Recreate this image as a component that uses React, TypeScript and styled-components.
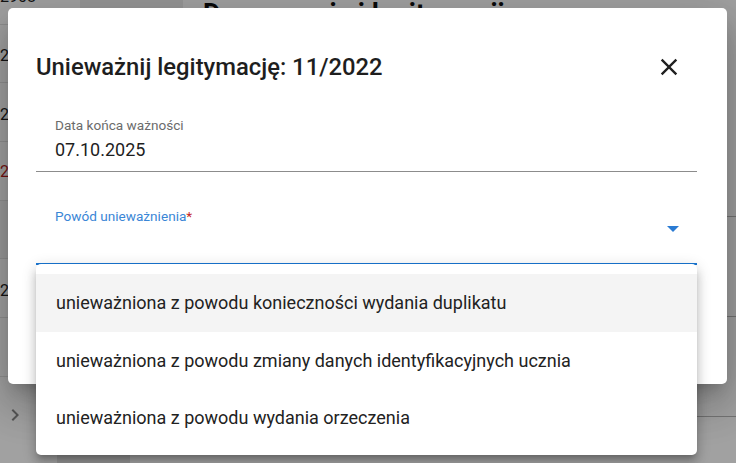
import React from "react";
import styled, { createGlobalStyle } from "styled-components";

const Global = createGlobalStyle`
  html, body { margin: 0; padding: 0; background: #fff; }
  body { font-family: Roboto, "Noto Sans", Arial, sans-serif; }
  * { box-sizing: border-box; }
`;

const Page = styled.div`
  position: relative;
  width: 736px;
  height: 463px;
  overflow: hidden;
  background: #fff;
  font-family: Roboto, "Noto Sans", Arial, sans-serif;
`;

const Layout = styled.div`
  display: grid;
  grid-template-columns: 80px 103px 1fr;
  grid-template-rows: 384px 79px;
  height: 100%;
`;

const NumCol = styled.div`
  grid-column: 1;
  grid-row: 1;
  display: flex;
  flex-direction: column;
  margin-top: -34px;
`;

const NumRow = styled.div<{ $tint?: boolean; $red?: boolean }>`
  height: 58.67px;
  flex: none;
  display: flex;
  align-items: center;
  border-bottom: 1px solid #e2e2e2;
  background: ${(p) => (p.$tint ? "#f6f6f6" : "#fff")};
  color: ${(p) => (p.$red ? "#b71c1c" : "#222")};
  font-size: 16px;
  padding-top: ${(p) => (p.$red ? "2px" : "4px")};
`;

const ShadeCol = styled.div`
  grid-column: 2;
  grid-row: 1;
  background: #eeeeee;
`;

const Main = styled.div`
  grid-column: 3;
  grid-row: 1 / 3;
  padding-left: 20px;
  display: flex;
  flex-direction: column;
`;

const Heading = styled.h1`
  margin: -2px 0 0;
  font-size: 27px;
  line-height: 32px;
  font-weight: 700;
  color: #111;
`;

const BgTable = styled.div`
  margin-top: 87px;
  display: flex;
  flex-direction: column;
`;

const BgRow = styled.div`
  height: 100px;
  border-bottom: 1px solid #b8b8b8;
`;

const Footer = styled.div`
  grid-column: 1 / 3;
  grid-row: 2;
  display: flex;
`;

const ChevronCell = styled.div`
  width: 57px;
  display: flex;
  align-items: flex-start;
  padding: 19px 0 0 3px;
  color: #888;
`;

const DarkCell = styled.div`
  width: 73px;
  background: #e6e6e6;
`;

const Backdrop = styled.div`
  position: absolute;
  inset: 0;
  background: rgba(0, 0, 0, 0.37);
`;

const Dialog = styled.div`
  position: absolute;
  left: 8px;
  top: 8px;
  width: 719px;
  height: 376px;
  background: #fff;
  border-radius: 5px;
  box-shadow: 0px 11px 15px -7px rgba(0, 0, 0, 0.2),
    0px 24px 38px 3px rgba(0, 0, 0, 0.14), 0px 9px 46px 8px rgba(0, 0, 0, 0.12);
  padding: 43px 30px 0 28px;
  display: flex;
  flex-direction: column;
`;

const TitleRow = styled.div`
  display: flex;
  align-items: center;
  justify-content: space-between;
  height: 32px;
`;

const Title = styled.h2`
  margin: 0;
  font-size: 23.8px;
  line-height: 32px;
  font-weight: 500;
  color: #1e1e1e;
`;

const CloseBtn = styled.button`
  border: 0;
  background: none;
  padding: 0;
  margin-right: 14px;
  width: 28px;
  height: 28px;
  display: flex;
  color: #202020;
  cursor: pointer;
`;

const Field = styled.div<{ $top: number; $active?: boolean }>`
  margin-top: ${(p) => p.$top}px;
  padding: 5px 18px 9px 19px;
  border-bottom: ${(p) => (p.$active ? "2px solid #1976d2" : "1px solid #8c8c8c")};
  display: flex;
  flex-direction: column;
`;

const Label = styled.div<{ $active?: boolean }>`
  font-size: 13.6px;
  line-height: 16px;
  color: ${(p) => (p.$active ? "#3a86d6" : "#6b6b6b")};
`;

const Required = styled.span`
  color: #c62828;
`;

const ValueRow = styled.div`
  margin-top: 5.5px;
  height: 24px;
  display: flex;
  justify-content: space-between;
  align-items: flex-start;
  font-size: 18px;
  line-height: 24px;
  color: #1e1e1e;
`;

const Arrow = styled.svg`
  margin-top: -4px;
  flex: none;
`;

const Menu = styled.ul`
  position: absolute;
  left: 36px;
  top: 264px;
  width: 661px;
  margin: 0;
  padding: 10px 0 8.5px;
  list-style: none;
  background: #fff;
  border-radius: 5px;
  box-shadow: 0px 5px 5px -3px rgba(0, 0, 0, 0.2),
    0px 8px 10px 1px rgba(0, 0, 0, 0.14), 0px 3px 14px 2px rgba(0, 0, 0, 0.12);
`;

const MenuItem = styled.li<{ $hover?: boolean }>`
  height: 57.5px;
  display: flex;
  align-items: center;
  padding: 0 20px;
  font-size: 18px;
  color: #222;
  background: ${(p) => (p.$hover ? "#f4f4f4" : "transparent")};
`;

const rows = [
  { t: "2908" },
  { t: "2907" },
  { t: "2906" },
  { t: "2905", red: true },
  { t: "", tint: true },
  { t: "2903" },
  { t: "" },
];

const options = [
  "unieważniona z powodu konieczności wydania duplikatu",
  "unieważniona z powodu zmiany danych identyfikacyjnych ucznia",
  "unieważniona z powodu wydania orzeczenia",
];

export default function App() {
  return (
    <>
      <Global />
      <Page>
        <Layout>
          <NumCol>
            {rows.map((r, i) => (
              <NumRow key={i} $red={r.red} $tint={r.tint}>
                {r.t}
              </NumRow>
            ))}
          </NumCol>
          <ShadeCol />
          <Main>
            <Heading>Dane ucznia i legitymacji</Heading>
            <BgTable>
              <BgRow />
              <BgRow />
              <BgRow />
            </BgTable>
          </Main>
          <Footer>
            <ChevronCell>
              <svg width="24" height="24" viewBox="0 0 24 24" fill="currentColor">
                <path d="M10 6 8.59 7.41 13.17 12l-4.58 4.59L10 18l6-6z" />
              </svg>
            </ChevronCell>
            <DarkCell />
          </Footer>
        </Layout>
        <Backdrop />
        <Dialog>
          <TitleRow>
            <Title>Unieważnij legitymację: 11/2022</Title>
            <CloseBtn aria-label="Zamknij">
              <svg width="28" height="28" viewBox="0 0 24 24" fill="currentColor">
                <path d="M19 6.41 17.59 5 12 10.59 6.41 5 5 6.41 10.59 12 5 17.59 6.41 19 12 13.41 17.59 19 19 17.59 13.41 12z" />
              </svg>
            </CloseBtn>
          </TitleRow>
          <Field $top={28.5}>
            <Label>Data końca ważności</Label>
            <ValueRow>07.10.2025</ValueRow>
          </Field>
          <Field $top={31} $active>
            <Label $active>
              Powód unieważnienia<Required>*</Required>
            </Label>
            <ValueRow>
              <span />
              <Arrow width="12" height="6" viewBox="0 0 12 6">
                <path d="M0 0 L12 0 L6 6 Z" fill="#2a7bd3" />
              </Arrow>
            </ValueRow>
          </Field>
        </Dialog>
        <Menu>
          {options.map((o, i) => (
            <MenuItem key={o} $hover={i === 0}>
              {o}
            </MenuItem>
          ))}
        </Menu>
      </Page>
    </>
  );
}
